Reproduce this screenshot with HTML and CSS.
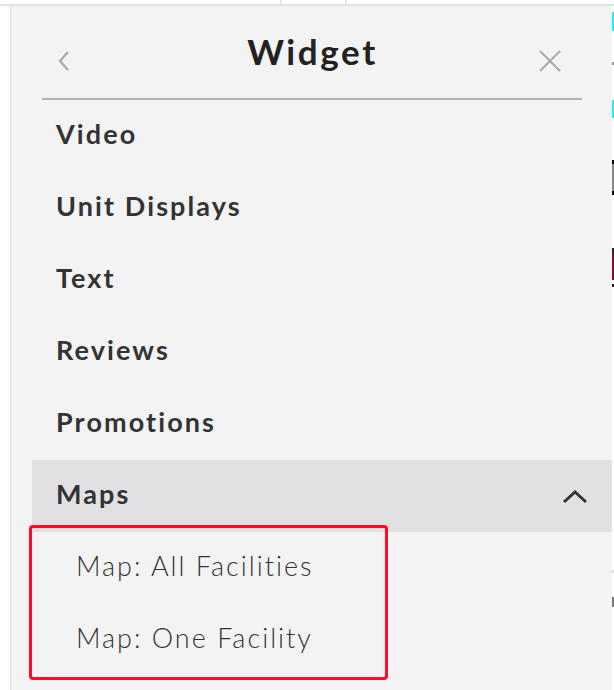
FILE: index.html
```html
<!DOCTYPE html>
<html lang="en">
<head>
    <meta charset="UTF-8">
    <title>Widget</title>
    <link rel="stylesheet" href="styles.css">
</head>
<body>
    <div class="top-strip">
        <span class="tick tick-a"></span>
        <span class="tick tick-b"></span>
    </div>
    <div class="stage">
        <div class="gutter"></div>

        <div class="panel">
            <div class="panel-header">
                <button class="icon-button back-button" aria-label="Back">
                    <svg width="14" height="22" viewBox="0 0 14 22">
                        <polyline points="11,2 3,11 11,20" fill="none" stroke="#aaaaaa" stroke-width="2.2"/>
                    </svg>
                </button>
                <h1 class="panel-title">Widget</h1>
                <button class="icon-button close-button" aria-label="Close">
                    <svg width="22" height="22" viewBox="0 0 22 22">
                        <line x1="1" y1="1" x2="21" y2="21" stroke="#aaaaaa" stroke-width="2"/>
                        <line x1="21" y1="1" x2="1" y2="21" stroke="#aaaaaa" stroke-width="2"/>
                    </svg>
                </button>
            </div>
            <div class="divider"></div>

            <ul class="menu">
                <li class="menu-item">Video</li>
                <li class="menu-item">Unit Displays</li>
                <li class="menu-item">Text</li>
                <li class="menu-item">Reviews</li>
                <li class="menu-item">Promotions</li>
                <li class="menu-item menu-item-open">
                    <span>Maps</span>
                    <svg class="caret" width="26" height="15" viewBox="0 0 26 15">
                        <polyline points="2,13 13,3 24,13" fill="none" stroke="#333333" stroke-width="3"/>
                    </svg>
                </li>
                <li class="submenu-item">Map: All Facilities</li>
                <li class="submenu-item">Map: One Facility</li>
            </ul>

            <!-- highlight box drawn over the sub menu -->
            <div class="highlight-box"></div>
        </div>

        <div class="edge">
            <span class="bit cyan" style="top: 6px; height: 19px;"></span>
            <span class="bit grey" style="top: 56px; height: 3px;"></span>
            <span class="bit cyan" style="top: 94px; height: 18px;"></span>
            <span class="bit framed" style="top: 154px; height: 35px;"></span>
            <span class="bit crimson" style="top: 242px; height: 32px;"></span>
            <span class="bit dark" style="top: 278px; height: 3px;"></span>
            <span class="bit pale" style="top: 564px; height: 3px;"></span>
            <span class="bit mid" style="top: 591px; height: 10px;"></span>
        </div>
    </div>
</body>
</html>
```

FILE: styles.css
```css
body {
    margin: 0;
    background-color: #ffffff;
    font-family: Lato, "Liberation Sans", sans-serif;
    color: #333333;
}
.top-strip {
    position: relative;
    height: 4px;
    border-bottom: 2px solid #e4e4e4;
}
.tick {
    position: absolute;
    top: 0;
    width: 2px;
    height: 4px;
    background-color: #e4e4e4;
}
.tick-a {
    left: 280px;
}
.tick-b {
    left: 345px;
}
.stage {
    display: flex;
    height: 684px;
}
.gutter {
    width: 10px;
}
.panel {
    position: relative;
    width: 600px;
    background-color: #f3f3f3;
    border-left: 2px solid #e6e6e6;
}
.panel-header {
    display: grid;
    grid-template-columns: 1fr auto 1fr;
    align-items: center;
    height: 92px;
    padding: 0 51px 0 45px;
}
.icon-button {
    background: none;
    border: none;
    padding: 0;
    display: flex;
    margin-top: 18px;
}
.back-button {
    justify-self: start;
}
.close-button {
    justify-self: end;
}
.panel-title {
    margin: 0 0 2px 7px;
    font-size: 35px;
    font-weight: 700;
    color: #222222;
    letter-spacing: 2.6px;
}
.divider {
    height: 2px;
    margin: 0 30px;
    background-color: #b2b2b2;
}
.menu {
    list-style: none;
    margin: 0 0 0 20px;
    padding: 0;
}
.menu-item {
    display: flex;
    align-items: center;
    justify-content: space-between;
    box-sizing: border-box;
    height: 72px;
    padding: 0 24px 5px;
    font-size: 27px;
    font-weight: 700;
    letter-spacing: 2.1px;
}
.menu-item-open {
    background-color: #e1e1e3;
    padding-bottom: 0;
}
.menu-item-open span {
    margin-bottom: 5px;
}
.submenu-item {
    display: flex;
    align-items: center;
    box-sizing: border-box;
    height: 72px;
    padding: 0 0 5px 44px;
    font-size: 27px;
    font-weight: 300;
    letter-spacing: 2px;
}
.highlight-box {
    position: absolute;
    left: 17px;
    top: 519px;
    width: 353px;
    height: 149px;
    border: 3px solid #ff0a2a;
    border-radius: 4px;
}
.edge {
    position: relative;
    width: 2px;
}
.bit {
    position: absolute;
    left: 0;
    width: 2px;
}
.cyan {
    background-color: #1ef0f0;
}
.grey {
    background-color: #999999;
}
.framed {
    background-color: #888888;
    border-top: 4px solid #000000;
    border-bottom: 4px solid #000000;
    box-sizing: border-box;
}
.crimson {
    background: linear-gradient(#222222, #8a0f3a 40%, #7a0d33);
}
.dark {
    background-color: #222222;
}
.pale {
    background-color: #dddddd;
}
.mid {
    background-color: #777777;
}
```
